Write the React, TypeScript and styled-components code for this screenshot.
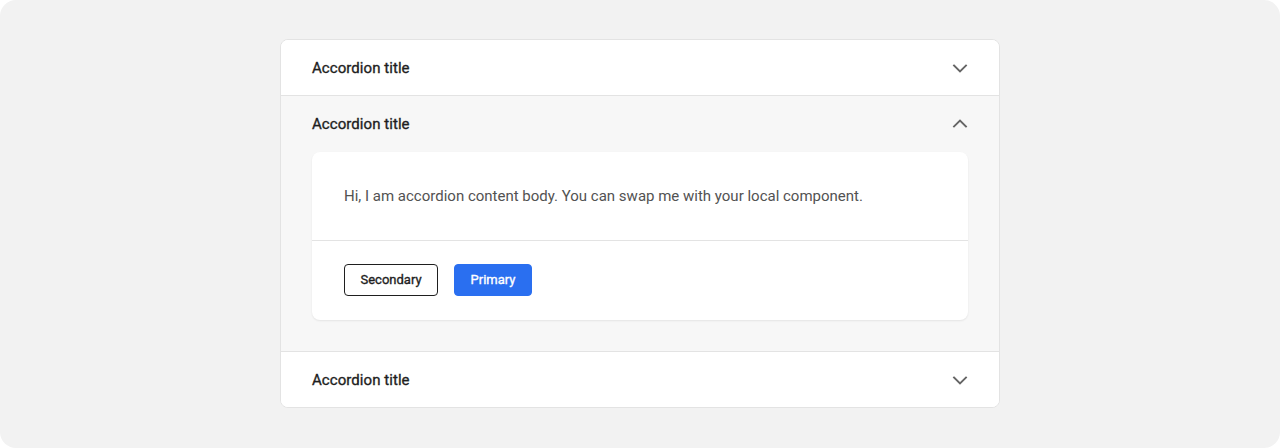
import React, { useState } from 'react';
import styled, { createGlobalStyle } from 'styled-components';

const GlobalStyle = createGlobalStyle`
  html, body {
    margin: 0;
    padding: 0;
    background: #ffffff;
  }
  * {
    box-sizing: border-box;
  }
  body {
    font-family: Roboto, "Liberation Sans", sans-serif;
    -webkit-font-smoothing: antialiased;
  }
`;

// Roboto Medium isn't installed, so fake the 500 weight with a thin stroke
const medium = `
  font-family: Roboto, "Liberation Sans", sans-serif;
  font-weight: 400;
  -webkit-text-stroke: 0.35px currentColor;
`;

const Frame = styled.div`
  width: 1280px;
  height: 448px;
  background: #f2f2f2;
  border-radius: 16px;
  padding-top: 39px;
  display: flex;
  justify-content: center;
  align-items: flex-start;
`;

const Accordion = styled.div`
  width: 720px;
  background: #ffffff;
  border: 1px solid #e3e3e3;
  border-radius: 8px;
  overflow: hidden;
`;

const Item = styled.div<{ $open: boolean; $last?: boolean }>`
  background: ${p => (p.$open ? '#f7f7f7' : '#ffffff')};
  border-bottom: ${p => (p.$last ? 'none' : '1px solid #e3e3e3')};
`;

const Header = styled.button`
  width: 100%;
  height: 55px;
  display: flex;
  align-items: center;
  justify-content: space-between;
  padding: 0 31px;
  background: transparent;
  border: none;
  cursor: pointer;
  font-family: inherit;
`;

const Title = styled.span`
  ${medium}
  font-size: 15px;
  letter-spacing: 0.06px;
  color: #1f1f1f;
`;

const Chevron = styled.svg<{ $open: boolean }>`
  width: 16px;
  height: 16px;
  transform: ${p => (p.$open ? 'rotate(180deg)' : 'none')};
`;

const Body = styled.div`
  padding: 1px 31px 31px;
`;

const Card = styled.div`
  background: #ffffff;
  border-radius: 8px;
  box-shadow: 0 1px 2px rgba(0, 0, 0, 0.08);
`;

const CardText = styled.p`
  margin: 0;
  padding: 32px;
  font-size: 15px;
  line-height: 24px;
  color: #525252;
  border-bottom: 1px solid #e3e3e3;
`;

const CardFooter = styled.div`
  display: flex;
  gap: 16px;
  padding: 23px 32px 24px;
`;

const Button = styled.button<{ $primary?: boolean }>`
  height: 32px;
  padding: 0 15.5px 1px;
  border-radius: 4px;
  border: 1px solid ${p => (p.$primary ? '#2a6ff0' : '#1f1f1f')};
  background: ${p => (p.$primary ? '#2a6ff0' : '#ffffff')};
  color: ${p => (p.$primary ? '#ffffff' : '#1f1f1f')};
  ${medium}
  font-size: 13px;
  cursor: pointer;
`;

const ChevronIcon = ({ open }: { open: boolean }) => (
  <Chevron $open={open} viewBox="0 0 16 16" fill="none">
    <path d="M2 5.5L8 11.5L14 5.5" stroke="#666666" strokeWidth="1.9" strokeLinecap="square" />
  </Chevron>
);

export default function App() {
  const [open, setOpen] = useState<number | null>(1);
  const items = [0, 1, 2];

  return (
    <>
      <GlobalStyle />
      <Frame>
        <Accordion>
          {items.map(i => {
            const isOpen = open === i;
            return (
              <Item key={i} $open={isOpen} $last={i === items.length - 1}>
                <Header onClick={() => setOpen(isOpen ? null : i)}>
                  <Title>Accordion title</Title>
                  <ChevronIcon open={isOpen} />
                </Header>
                {isOpen && (
                  <Body>
                    <Card>
                      <CardText>
                        Hi, I am accordion content body. You can swap me with your local component.
                      </CardText>
                      <CardFooter>
                        <Button>Secondary</Button>
                        <Button $primary>Primary</Button>
                      </CardFooter>
                    </Card>
                  </Body>
                )}
              </Item>
            );
          })}
        </Accordion>
      </Frame>
    </>
  );
}
